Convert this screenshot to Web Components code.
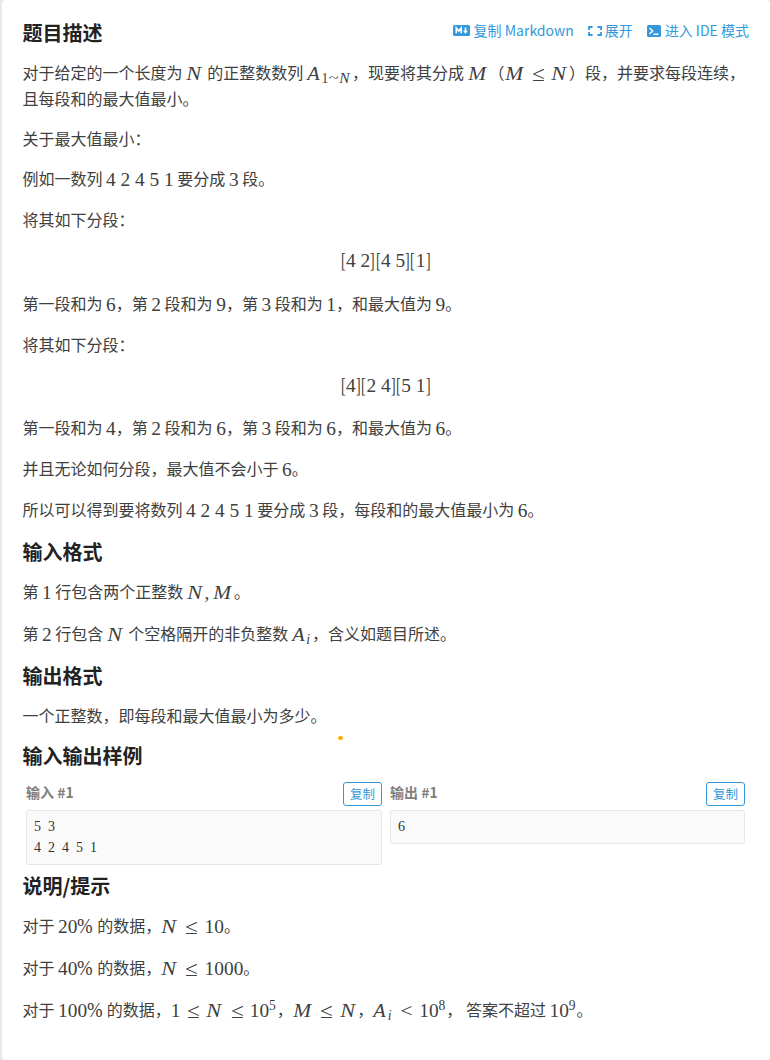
<!DOCTYPE html>
<html lang="zh-CN">
<head>
<meta charset="utf-8">
<title>题目描述</title>
<style>
html,body{margin:0;height:1060px;background:#e9e9e9;overflow:hidden}
body{font:16px/26px "Noto Sans CJK SC",sans-serif;color:#404040}
</style>
</head>
<body>
<problem-card>
  <section-title style="--top:19px" slot="title">题目描述</section-title>
  <tool-bar slot="tools"></tool-bar>
  <text-line style="--top:14px;--h:52px">对于给定的一个长度为 <tex-math f="N"></tex-math> 的正整数数列 <tex-math f="A _1 _~ _N"></tex-math>，现要将其分成 <tex-math f="M"></tex-math>（<tex-math f="M ≤ N"></tex-math>）段，并要求每段连续，<br>且每段和的最大值最小。</text-line>
  <text-line style="--top:14px">关于最大值最小：</text-line>
  <text-line style="--top:14px">例如一数列 <tex-math f="4 sp 2 sp 4 sp 5 sp 1"></tex-math> 要分成 <tex-math f="3"></tex-math> 段。</text-line>
  <text-line style="--top:15px">将其如下分段：</text-line>
  <text-line style="--top:14px" center><tex-math f="[ 4 sp 2 ] [ 4 sp 5 ] [ 1 ]"></tex-math></text-line>
  <text-line style="--top:18px">第一段和为 <tex-math f="6"></tex-math>，第 <tex-math f="2"></tex-math> 段和为 <tex-math f="9"></tex-math>，第 <tex-math f="3"></tex-math> 段和为 <tex-math f="1"></tex-math>，和最大值为 <tex-math f="9"></tex-math>。</text-line>
  <text-line style="--top:15px">将其如下分段：</text-line>
  <text-line style="--top:14px" center><tex-math f="[ 4 ] [ 2 sp 4 ] [ 5 sp 1 ]"></tex-math></text-line>
  <text-line style="--top:17px">第一段和为 <tex-math f="4"></tex-math>，第 <tex-math f="2"></tex-math> 段和为 <tex-math f="6"></tex-math>，第 <tex-math f="3"></tex-math> 段和为 <tex-math f="6"></tex-math>，和最大值为 <tex-math f="6"></tex-math>。</text-line>
  <text-line style="--top:15px">并且无论如何分段，最大值不会小于 <tex-math f="6"></tex-math>。</text-line>
  <text-line style="--top:15px">所以可以得到要将数列 <tex-math f="4 sp 2 sp 4 sp 5 sp 1"></tex-math> 要分成 <tex-math f="3"></tex-math> 段，每段和的最大值最小为 <tex-math f="6"></tex-math>。</text-line>
  <section-title style="--top:16px">输入格式</section-title>
  <text-line style="--top:14px">第 <tex-math f="1"></tex-math> 行包含两个正整数 <tex-math f="N , M"></tex-math>。</text-line>
  <text-line style="--top:16px">第 <tex-math f="2"></tex-math> 行包含 <tex-math f="N"></tex-math> 个空格隔开的非负整数 <tex-math f="A _i"></tex-math>，含义如题目所述。</text-line>
  <section-title style="--top:16px">输出格式</section-title>
  <text-line style="--top:14px">一个正整数，即每段和最大值最小为多少。</text-line>
  <section-title style="--top:14px" dot>输入输出样例</section-title>
  <sample-row>
    <sample-box label="输入 #1">5 3
4 2 4 5 1</sample-box>
    <sample-box label="输出 #1">6</sample-box>
  </sample-row>
  <section-title style="--top:7px">说明/提示</section-title>
  <text-line style="--top:14px">对于 <tex-math f="2 0 %"></tex-math> 的数据，<tex-math f="N ≤ 1 0"></tex-math>。</text-line>
  <text-line style="--top:16px">对于 <tex-math f="4 0 %"></tex-math> 的数据，<tex-math f="N ≤ 1 0 0 0"></tex-math>。</text-line>
  <text-line style="--top:16px">对于 <tex-math f="1 0 0 %"></tex-math> 的数据，<tex-math f="1 ≤ N ≤ 1 0 ^5"></tex-math>，<tex-math f="M ≤ N"></tex-math>，<tex-math f="A _i &lt; 1 0 ^8"></tex-math>， 答案不超过 <tex-math f="1 0 ^9"></tex-math>。</text-line>
</problem-card>
<script>
function define(name, html, init) {
  const t = document.createElement('template');
  t.innerHTML = html;
  customElements.define(name, class extends HTMLElement {
    constructor() {
      super();
      this.attachShadow({mode: 'open'}).append(t.content.cloneNode(true));
    }
    connectedCallback() { if (init) init(this, this.shadowRoot); }
  });
}

define('problem-card', `<style>
:host{display:block;box-sizing:border-box;margin-left:2px;height:1060px;background:#fff;border-radius:4px;padding:0 21px 0 20.5px}
header{display:flex;justify-content:space-between;height:45px}
</style><header><slot name="title"></slot><slot name="tools"></slot></header><slot></slot>`);

define('section-title', `<style>
:host{display:block;position:relative;margin-top:var(--top);height:26px;font-size:20px;line-height:28px;font-weight:700;color:#222;white-space:nowrap}
:host([dot])::after{content:"";position:absolute;left:315.5px;top:-6px;width:5px;height:4px;border-radius:50%;background:#ffa500}
</style><slot></slot>`);

define('text-line', `<style>
:host{display:block;margin-top:var(--top);height:var(--h,26px);white-space:nowrap}
:host([center]){text-align:center}
</style><slot></slot>`);

// Glyph table: text, advance in em, transform, class
const GLYPHS = {
  N: ['N', .912, 'translateX(.3px) scaleX(1.15)', 'it'],
  M: ['M', 1.079, 'translateX(.3px) scaleX(1.11)', 'it'],
  A: ['A', .75, 'translateX(.3px) scaleX(1.05)', 'it'],
  i: ['i', .345, 'none', 'it'],
  '≤': ['≤', 1.333, 'scale(1.2,1.1)', 'rel'],
  '<': ['<', 1.333, 'scaleX(1.1)', 'rel'],
  '~': ['~', .778, 'scaleX(1.3)', 'mid'],
  '%': ['%', .833, 'scale(.97,1.05)', ''],
  '[': ['[', .278, 'translateY(-1px) scale(.72,1.13)', 'br'],
  ']': [']', .278, 'translateY(-1px) scale(.72,1.13)', 'br'],
  ',': [',', .444, 'none', ''],
  sp: ['\u00a0', .25, 'none', '']
};
define('tex-math', `<style>
:host{display:inline;font-family:"Liberation Serif",serif;font-size:19.36px;line-height:0}
span{display:inline-block;line-height:0;white-space:nowrap;vertical-align:-1px}
b{display:inline-block;font-weight:400;line-height:0;transform-origin:0 50%}
.it{font-style:italic}
.rel,.mid{text-align:center}
.rel b,.mid b{transform-origin:50% 50%}
.sub{font-size:13.55px;vertical-align:-4px}
.sup{font-size:13.55px;vertical-align:6px}
.end{margin-right:1px}
</style>`, (el, root) => {
  const keys = el.getAttribute('f').split(' ');
  keys.forEach((key, n) => {
    let k = key;
    const pos = k[0] === '_' ? 'sub' : k[0] === '^' ? 'sup' : '';
    if (pos) k = k.slice(1);
    const last = pos && (!keys[n + 1] || keys[n + 1][0] !== key[0]);
    const g = GLYPHS[k] || [k, .5, 'none', ''];
    const s = document.createElement('span'), b = document.createElement('b');
    s.className = g[3] + ' ' + pos + (last ? ' end' : '');
    s.style.width = g[1] + 'em';
    b.textContent = g[0];
    b.style.transform = g[2];
    s.append(b);
    root.append(s);
  });
});

define('tool-bar', `<style>
:host{display:flex;align-items:center;height:22px;margin-top:19px;color:#3498db;font-size:14px;line-height:22px;white-space:nowrap}
a{display:flex;align-items:center}
a+a{margin-left:14px}
svg{display:block;margin:1px 4px 0 0}
a:nth-of-type(2) svg{margin-right:3px}
</style>
<a><svg width="17" height="11" viewBox="0 0 18 11" preserveAspectRatio="none"><rect width="18" height="11" rx="1.5" fill="currentColor"/><path d="M3.5 8.2V3L6.1 6l2.6-3v5.2M13.2 2.6v4" fill="none" stroke="#fff" stroke-width="1.7"/><path d="M10.6 5.7h5.2l-2.6 3z" fill="#fff"/></svg>复制 Markdown</a>
<a><svg width="14" height="10" viewBox="0 0 14 10"><path d="M4.5 1H1v3M9.5 1H13v3M1 6v3h3.5M13 6v3H9.5" fill="none" stroke="currentColor" stroke-width="1.8"/></svg>展开</a>
<a><svg width="14" height="12" viewBox="0 0 14 12"><rect width="14" height="12" rx="1.5" fill="currentColor"/><path d="M2.5 2.9L5.7 6 2.5 9.1M6.5 9.3h5" fill="none" stroke="#fff" stroke-width="1.4"/></svg>进入 IDE 模式</a>`);

define('sample-row', `<style>
:host{display:grid;grid-template-columns:356px 355px;column-gap:8px;align-items:start;margin:14px 0 0 3.5px;height:83px}
</style><slot></slot>`);

define('sample-box', `<style>
:host{display:block}
header{display:flex;justify-content:space-between;height:28px}
strong{font-size:14px;line-height:20px;color:#7f7f7f}
button{box-sizing:border-box;width:39px;height:24px;padding:0;border:1px solid #3498db;border-radius:3px;background:#fff;color:#3498db;font:12.5px/22px "Noto Sans CJK SC",sans-serif}
pre{box-sizing:border-box;margin:0;padding:5px 7px 6px;border:1px solid #e6e6e6;border-radius:2px;background:#fafafa;color:#333;font:14px/21px "Liberation Serif",serif;word-spacing:3.5px}
</style><header><strong></strong><button>复制</button></header><pre><slot></slot></pre>`,
(el, root) => { root.querySelector('strong').textContent = el.getAttribute('label'); });
</script>
</body>
</html>
